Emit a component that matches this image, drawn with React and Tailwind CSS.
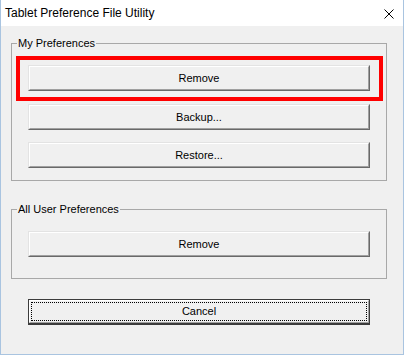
import React from 'react'

function Button({ children }) {
  return (
    <div className="h-[26px] border border-t-[#e3e3e3] border-l-[#e3e3e3] border-b-[#696969] border-r-[#696969]">
      <div className="h-full border border-t-white border-l-white border-b-[#a0a0a0] border-r-[#a0a0a0] bg-[#f0f0f0] flex items-center justify-center text-[11px] text-black">
        {children}
      </div>
    </div>
  )
}

function DefaultButton({ children }) {
  return (
    <div className="h-[26px] border border-[#3c3c3c] border-b-2">
      <div className="h-full border border-t-white border-l-white border-b-[#a0a0a0] border-r-[#a0a0a0] bg-[#f0f0f0] p-[1px]">
        <div className="h-full border border-dotted border-black flex items-center justify-center text-[11px] text-black">
          {children}
        </div>
      </div>
    </div>
  )
}

function Group({ label, className, children }) {
  return (
    <div className={`relative border border-[#a8a8a8] ${className}`}>
      <span className="absolute left-[5px] top-[-8px] bg-[#f0f0f0] px-[1px] text-[11px] leading-[14px] text-black">
        {label}
      </span>
      {children}
    </div>
  )
}

export default function App() {
  return (
    <div
      className="w-[404px] h-[355px] flex flex-col border-x border-b border-[#a9c4e0] bg-[#f0f0f0]"
      style={{ fontFamily: '"Liberation Sans", Arial, sans-serif' }}
    >
      <div className="h-[26px] bg-white flex items-center justify-between pl-[4px] pr-[9px]">
        <span className="text-[12px] leading-none text-black">Tablet Preference File Utility</span>
        <svg width="10" height="10" viewBox="0 0 10 10" className="mt-[1px]">
          <path d="M0.5 0.5 L9.5 9.5 M9.5 0.5 L0.5 9.5" stroke="#000" strokeWidth="1" fill="none" />
        </svg>
      </div>

      <div className="flex flex-col pl-[10px] pr-[16px]">
        <Group label="My Preferences" className="mt-[17px] h-[138px] px-[16px] pt-[21px]">
          <div className="relative">
            <Button>Remove</Button>
            <div className="absolute left-[-12px] right-[-13px] top-[-9px] bottom-[-10px] border-4 border-[#ff0000]" />
          </div>
          <div className="mt-[13px]">
            <Button>Backup...</Button>
          </div>
          <div className="mt-[12px]">
            <Button>Restore...</Button>
          </div>
        </Group>

        <Group label="All User Preferences" className="mt-[28px] h-[70px] px-[16px] pt-[21px]">
          <Button>Remove</Button>
        </Group>

        <div className="mt-[20px] px-[17px]">
          <DefaultButton>Cancel</DefaultButton>
        </div>
      </div>
    </div>
  )
}
